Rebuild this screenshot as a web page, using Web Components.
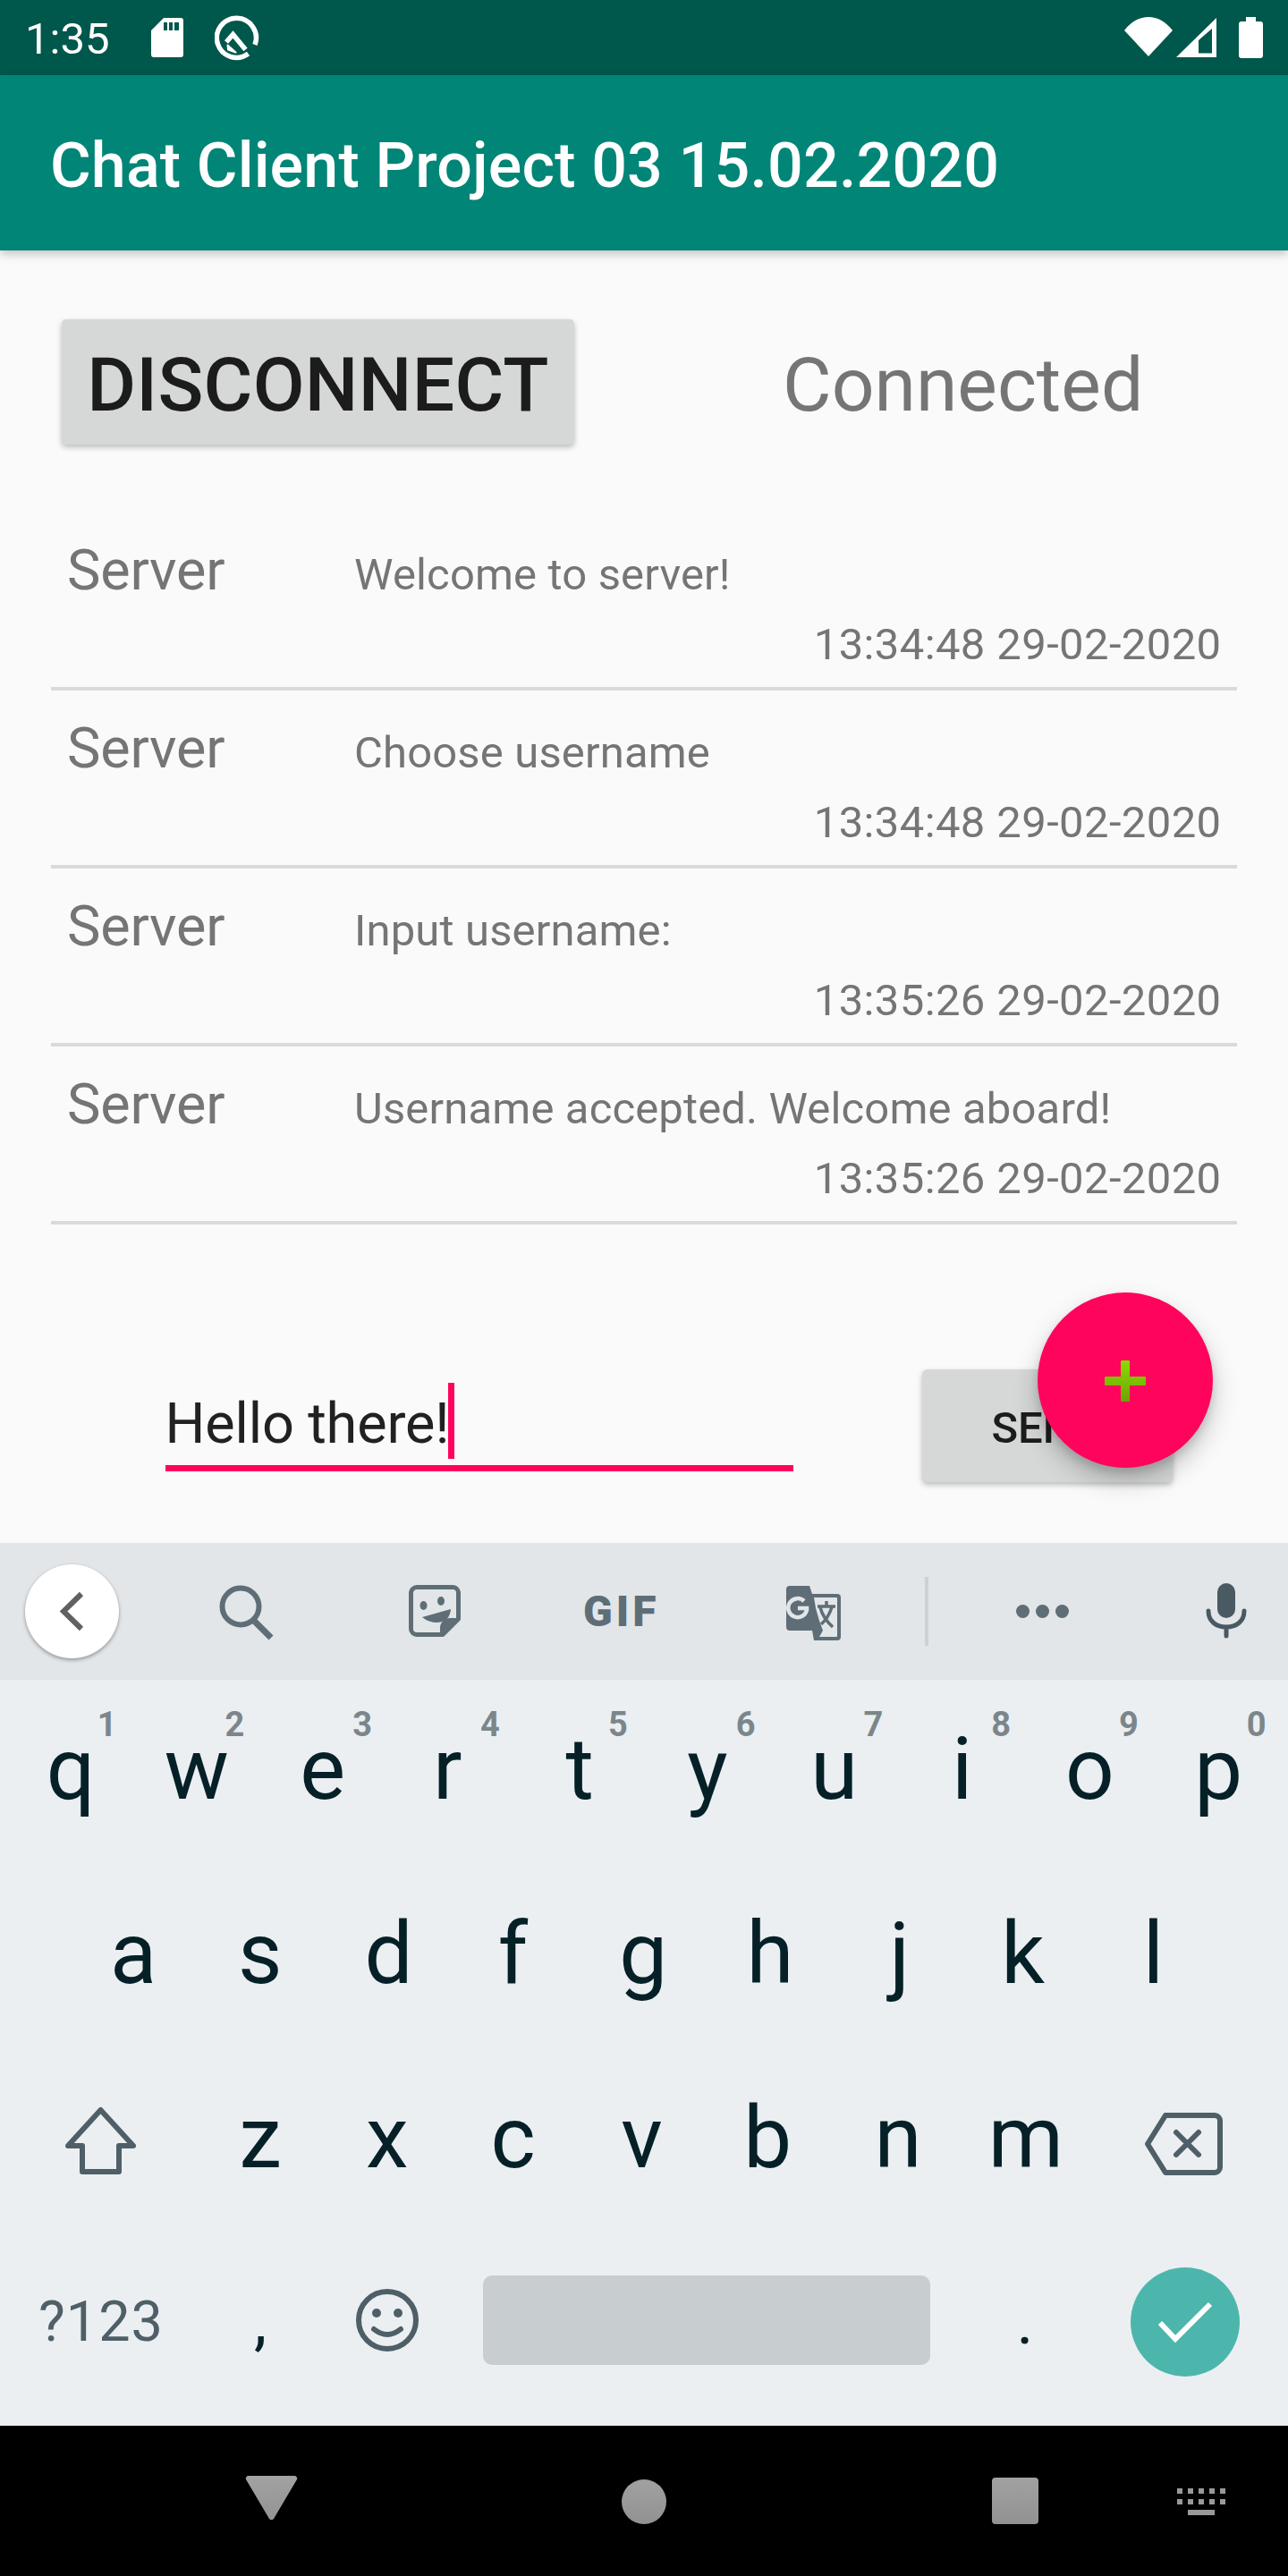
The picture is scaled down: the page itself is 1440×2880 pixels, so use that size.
<!DOCTYPE html>
<html lang="en">
<head>
  <meta charset="UTF-8">
  <meta name="viewport" content="width=device-width, initial-scale=1.0">
  <title>Chat Client Project 03</title>
  <style>
    html, body {
      margin: 0;
      padding: 0;
      background: #fafafa;
    }
    body {
      font-family: Roboto, "Liberation Sans", sans-serif;
      width: 1440px;
      height: 2880px;
      overflow: hidden;
    }
  </style>
</head>
<body>
  <status-bar></status-bar>
  <app-bar>Chat Client Project 03 15.02.2020</app-bar>
  <chat-screen>
    <connection-row></connection-row>
    <chat-message sender="Server" time="13:34:48 29-02-2020">Welcome to server!</chat-message>
    <chat-message sender="Server" time="13:34:48 29-02-2020">Choose username</chat-message>
    <chat-message sender="Server" time="13:35:26 29-02-2020">Input username:</chat-message>
    <chat-message sender="Server" time="13:35:26 29-02-2020">Username accepted. Welcome aboard!</chat-message>
    <chat-composer></chat-composer>
    <chat-fab></chat-fab>
  </chat-screen>
  <kb-toolbar></kb-toolbar>
  <kb-keys></kb-keys>
  <nav-bar></nav-bar>

  <script>
    class StatusBar extends HTMLElement {
      constructor() {
        super()
        this.attachShadow({ mode: 'open' })
      }

      connectedCallback() {
        this.shadowRoot.innerHTML = `
          <style>
            :host {
              display: flex;
              align-items: center;
              height: 84px;
              background: #00574b;
              color: #fff;
              position: relative;
            }
            .time {
              font-size: 49px;
              margin-left: 28px;
              width: 141px;
              line-height: 84px;
              margin-top: 4px;
            }
            svg { display: block; }
            .spacer { flex: 1; }
          </style>
          <span class="time">1:35</span>
          <svg width="37" height="44" viewBox="0 0 37 44" style="margin-right:34px">
            <path fill-rule="evenodd" fill="#fff" d="M14 0H33a3 3 0 0 1 3 3V41a3 3 0 0 1-3 3H3a3 3 0 0 1-3-3V14ZM14 5V14H18V5ZM20 5V14H24V5ZM26 5V14H31V5Z"/>
          </svg>
          <svg width="50" height="52" viewBox="0 0 50 52" style="margin-top:2px">
            <path d="M37.5 43A22 22 0 1 1 45 33" fill="none" stroke="#fff" stroke-width="5.5"/>
            <path d="M13 30L20.5 21.5L34.5 38.5" fill="none" stroke="#fff" stroke-width="5.5"/>
            <path d="M14.5 33.5L23.5 41.5L15 38.5Z" fill="#fff" stroke="#fff" stroke-width="2" stroke-linejoin="round"/>
          </svg>
          <span class="spacer"></span>
          <svg width="54" height="44" viewBox="0 0 54 44" style="margin-right:4px;margin-top:-2px">
            <path fill="#fff" d="M0 15Q12 0 27 0T54 15L27 44Z"/>
          </svg>
          <svg width="45" height="44" viewBox="0 0 45 44" style="margin-right:25px;margin-top:-1px">
            <path fill="#fff" fill-rule="evenodd" d="M45 0V44H0ZM40 12L25 25V39.5H40Z"/>
          </svg>
          <svg width="27" height="46" viewBox="0 0 27 46" style="margin-right:28px">
            <path fill="#fff" d="M8 0H19V5H24a3 3 0 0 1 3 3V43a3 3 0 0 1-3 3H3a3 3 0 0 1-3-3V8a3 3 0 0 1 3-3H8Z"/>
          </svg>
        `
      }
    }

    class AppBar extends HTMLElement {
      constructor() {
        super()
        this.attachShadow({ mode: 'open' })
      }

      connectedCallback() {
        this.shadowRoot.innerHTML = `
          <style>
            :host {
              display: block;
              height: 196px;
              background: #008577;
              color: #fff;
              position: relative;
              z-index: 1;
              box-shadow: 0 4px 10px rgba(0, 0, 0, .22);
              font-size: 70px;
              font-weight: 500;
              line-height: 202px;
              letter-spacing: .15px;
              padding-left: 56px;
              box-sizing: border-box;
            }
          </style>
          <slot></slot>
        `
      }
    }

    class ChatScreen extends HTMLElement {
      constructor() {
        super()
        this.attachShadow({ mode: 'open' })
      }

      connectedCallback() {
        this.shadowRoot.innerHTML = `
          <style>
            :host {
              display: flex;
              flex-direction: column;
              height: 1445px;
              background: #fafafa;
              position: relative;
            }
          </style>
          <slot></slot>
        `
      }
    }

    class ConnectionRow extends HTMLElement {
      constructor() {
        super()
        this.attachShadow({ mode: 'open' })
      }

      connectedCallback() {
        this.shadowRoot.innerHTML = `
          <style>
            :host {
              display: flex;
              align-items: flex-start;
              height: 293px;
              padding: 77px 0 0 69px;
              box-sizing: border-box;
            }
            .btn {
              width: 573px;
              height: 140px;
              border-radius: 5px;
              background: #d6d7d7;
              box-shadow: 0 3px 6px rgba(0, 0, 0, .25);
              color: #1c1c1c;
              font-size: 84px;
              font-weight: 500;
              letter-spacing: .3px;
              line-height: 148px;
              text-align: center;
            }
            .state {
              margin-left: 233px;
              color: #757575;
              font-size: 84px;
              line-height: 148px;
            }
          </style>
          <div class="btn">DISCONNECT</div>
          <div class="state">Connected</div>
        `
      }
    }

    class ChatMessage extends HTMLElement {
      constructor() {
        super()
        this.attachShadow({ mode: 'open' })
      }

      connectedCallback() {
        this.shadowRoot.innerHTML = `
          <style>
            :host {
              display: grid;
              grid-template-columns: 339px 1fr;
              grid-template-rows: 119px 1fr;
              height: 199px;
              margin: 0 57px;
              box-sizing: border-box;
              border-bottom: 4px solid #d9dbdb;
              color: #757575;
            }
            .sender {
              padding-left: 18px;
              font-size: 63px;
              letter-spacing: -.2px;
              line-height: 74px;
              margin-top: 28px;
            }
            .body {
              font-size: 49px;
              letter-spacing: .15px;
              line-height: 58px;
              margin-top: 41px;
            }
            .time {
              grid-column: 1 / 3;
              text-align: right;
              padding-right: 17.5px;
              font-size: 49px;
              letter-spacing: .38px;
              line-height: 58px;
            }
          </style>
          <div class="sender">${this.getAttribute('sender')}</div>
          <div class="body"><slot></slot></div>
          <div class="time">${this.getAttribute('time')}</div>
        `
      }
    }

    class ChatComposer extends HTMLElement {
      constructor() {
        super()
        this.attachShadow({ mode: 'open' })
      }

      connectedCallback() {
        this.shadowRoot.innerHTML = `
          <style>
            :host {
              display: flex;
              align-items: flex-start;
              padding: 164px 0 0 185px;
              box-sizing: border-box;
            }
            .field {
              width: 702px;
              height: 106px;
              margin-top: -1px;
              border-bottom: 7px solid #ff045c;
              color: #212121;
              font-size: 63px;
              letter-spacing: -.15px;
              line-height: 74px;
              display: flex;
              align-items: flex-start;
            }
            .text {
              margin: 22.5px 0 0 -.5px;
            }
            .caret {
              width: 7px;
              height: 85px;
              background: #ff045c;
              margin: 14px 0 0 -1px;
            }
            .send {
              width: 280px;
              height: 126px;
              margin: -2px 0 0 144px;
              padding-right: 1px;
              box-sizing: border-box;
              border-radius: 6px;
              background: #d6d7d7;
              box-shadow: 0 3px 6px rgba(0, 0, 0, .25);
              color: #1c1c1c;
              font-size: 49px;
              font-weight: 500;
              line-height: 131px;
              text-align: center;
            }
          </style>
          <div class="field"><span class="text">Hello there!</span><span class="caret"></span></div>
          <div class="send">SEND</div>
        `
      }
    }

    class ChatFab extends HTMLElement {
      constructor() {
        super()
        this.attachShadow({ mode: 'open' })
      }

      connectedCallback() {
        // floats over the send button
        this.shadowRoot.innerHTML = `
          <style>
            :host {
              display: block;
              position: absolute;
              left: 1160px;
              top: 1165px;
              width: 196px;
              height: 196px;
              border-radius: 50%;
              background: #ff045c;
              box-shadow: 0 14px 28px rgba(0, 0, 0, .22), 0 6px 10px rgba(0, 0, 0, .12);
            }
            svg {
              position: absolute;
              left: 75px;
              top: 76px;
            }
          </style>
          <svg width="46" height="46" viewBox="0 0 46 46">
            <defs>
              <linearGradient id="g" x1="0" y1="0" x2="0" y2="1">
                <stop offset="0" stop-color="#8bdc00"/>
                <stop offset="1" stop-color="#6ea300"/>
              </linearGradient>
            </defs>
            <path fill="url(#g)" d="M18 1a1 1 0 0 1 1-1h8a1 1 0 0 1 1 1V18H45a1 1 0 0 1 1 1v8a1 1 0 0 1-1 1H28V45a1 1 0 0 1-1 1H19a1 1 0 0 1-1-1V28H1a1 1 0 0 1-1-1V19a1 1 0 0 1 1-1H18Z"/>
          </svg>
        `
      }
    }

    class KbToolbar extends HTMLElement {
      constructor() {
        super()
        this.attachShadow({ mode: 'open' })
      }

      connectedCallback() {
        this.shadowRoot.innerHTML = `
          <style>
            :host {
              display: block;
              height: 153px;
              background: #e2e6e9;
              position: relative;
              color: #5f6e76;
            }
            svg { position: absolute; display: block; }
            .back {
              position: absolute;
              left: 28px;
              top: 24px;
              width: 105px;
              height: 105px;
              border-radius: 50%;
              background: #fff;
              box-shadow: 0 2px 4px rgba(0, 0, 0, .35);
            }
            .gif {
              position: absolute;
              left: 652px;
              top: 50px;
              font-size: 48px;
              line-height: 54px;
              font-weight: 900;
              letter-spacing: 4px;
              color: #5f6e76;
            }
            .rule {
              position: absolute;
              left: 1034px;
              top: 38px;
              width: 4px;
              height: 77px;
              background: #ccd1d3;
            }
          </style>
          <div class="back"></div>
          <svg style="left:64px;top:54px" width="32" height="45" viewBox="0 0 32 45">
            <path d="M27 3L7 22.5L27 42" fill="none" stroke="#616161" stroke-width="6"/>
          </svg>
          <svg style="left:244px;top:46px" width="64" height="64" viewBox="0 0 64 64">
            <circle cx="25" cy="25" r="20.5" fill="none" stroke="#5f6e76" stroke-width="6"/>
            <path d="M39 40L59 60" stroke="#5f6e76" stroke-width="7"/>
          </svg>
          <svg style="left:457px;top:47px" width="58" height="58" viewBox="0 0 58 58">
            <path fill="none" stroke="#5f6e76" stroke-width="5" stroke-linejoin="round" d="M9 2.5H49a6.5 6.5 0 0 1 6.5 6.5V38L38 55.5H9A6.5 6.5 0 0 1 2.5 49V9A6.5 6.5 0 0 1 9 2.5Z"/>
            <path fill="#5f6e76" d="M55 37H46a11 11 0 0 0-11 11v8Z"/>
            <ellipse cx="16.5" cy="23" rx="4" ry="5" fill="#5f6e76"/>
            <ellipse cx="36" cy="18" rx="4" ry="5" fill="#5f6e76"/>
            <path fill="#5f6e76" d="M15 36L47 27Q46 41 32 42Q22 42 15 36Z"/>
          </svg>
          <span class="gif">GIF</span>
          <svg style="left:879px;top:48px" width="62" height="62" viewBox="0 0 62 62">
            <path fill="#5f6e76" d="M4 0H26L29 9H57a4 4 0 0 1 4 4V57a4 4 0 0 1-4 4H31L29 50H4a4 4 0 0 1-4-4V4A4 4 0 0 1 4 0Z"/>
            <path fill="#e2e6e9" d="M31 13H56a1 1 0 0 1 1 1V56a1 1 0 0 1-1 1H37L41 50L37 39L33 25Z"/>
            <path fill="none" stroke="#5f6e76" stroke-width="3.5" d="M35 23H55M45 17V23M38 24Q41 36 52 46M51 24Q47 36 39 43"/>
            <path fill="none" stroke="#e2e6e9" stroke-width="4.5" d="M20 17A10.5 10.5 0 1 0 23 27V25H13"/>
          </svg>
          <div class="rule"></div>
          <svg style="left:1136px;top:69px" width="60" height="15" viewBox="0 0 60 15">
            <circle cx="7.5" cy="7.5" r="7.5" fill="#5f6e76"/>
            <circle cx="29.5" cy="7.5" r="7.5" fill="#5f6e76"/>
            <circle cx="51.5" cy="7.5" r="7.5" fill="#5f6e76"/>
          </svg>
          <svg style="left:1348px;top:45px" width="46" height="62" viewBox="0 0 46 62">
            <rect x="13" y="0" width="20" height="39" rx="10" fill="#4a5a62"/>
            <path d="M3 31C3 43 12 49 23 49S43 43 43 31M23 49V59" fill="none" stroke="#4a5a62" stroke-width="5" stroke-linecap="round"/>
          </svg>
        `
      }
    }

    // glyphs in the reference are centred by their ink, so a few need a nudge
    const NUDGE = { q: 2, e: -2, r: -5, u: -1, i: -1, o: -1, a: 2, s: 1, d: 2, f: -2, g: 1, j: 2, k: -3, z: 1, c: -2, v: -1, b: -3 }

    class KbKeys extends HTMLElement {
      constructor() {
        super()
        this.attachShadow({ mode: 'open' })
      }

      connectedCallback() {
        const key = (ch, hint) => {
          const n = NUDGE[ch] || 0
          const pad = n > 0 ? `padding-left:${n * 2}px` : n < 0 ? `padding-right:${-n * 2}px` : ''
          return `<span class="key" style="${pad}">${ch}${hint ? `<span class="hint">${hint}</span>` : ''}</span>`
        }
        const row1 = [...'qwertyuiop'].map((c, i) => key(c, String((i + 1) % 10))).join('')
        const row2 = [...'asdfghjkl'].map(c => key(c)).join('')
        const row3 = [...'zxcvbnm'].map(c => key(c)).join('')
        this.shadowRoot.innerHTML = `
          <style>
            :host {
              display: block;
              height: 834px;
              background: #ebeff2;
              color: #062028;
              font-size: 96px;
              box-sizing: border-box;
              padding-bottom: 10px;
            }
            .row {
              display: flex;
              height: 206px;
              padding-bottom: 6px;
              box-sizing: border-box;
            }
            .r1 { padding-left: 5.6px; }
            .r2 { padding-left: 75.6px; }
            .key {
              width: 142.8px;
              flex: none;
              box-sizing: border-box;
              text-align: center;
              line-height: 200px;
              position: relative;
            }
            .hint {
              position: absolute;
              left: 72px;
              top: 28px;
              width: 84px;
              font-size: 38px;
              line-height: 44px;
              font-weight: 700;
              color: #7b868c;
            }
            .side {
              flex: none;
              display: flex;
              align-items: center;
              justify-content: center;
            }
            .shift { width: 218.6px; }
            .del { width: 210px; }
            .r3 .side svg { display: block; }
            .r4 { align-items: center; }
            .sym {
              width: 222px;
              padding-left: 2px;
              text-align: center;
              font-size: 63px;
              letter-spacing: 1px;
              color: #4f5f67;
            }
            .comma, .dot {
              width: 134px;
              text-align: center;
              font-size: 72px;
              line-height: 200px;
            }
            .dot { line-height: 204px; margin-left: 39px; }
            .emoji { width: 150px; }
            .space {
              width: 500px;
              height: 100px;
              flex: none;
              margin: -4px 0 0 32px;
              border-radius: 10px;
              background: #c8cdd0;
            }
            .enter {
              width: 122px;
              height: 122px;
              flex: none;
              margin-left: 51px;
              border-radius: 50%;
              background: #4db6ac;
              display: flex;
              align-items: center;
              justify-content: center;
            }
          </style>
          <div class="row r1">${row1}</div>
          <div class="row r2">${row2}</div>
          <div class="row r3">
            <span class="side shift">
              <svg width="79" height="76" viewBox="0 0 79 76" style="margin-left:6px;margin-top:6px">
                <path fill="none" stroke="#4f5f67" stroke-width="6" stroke-linejoin="round" d="M39.5 4L76 44H60V73H19V44H3Z"/>
              </svg>
            </span>
            ${row3}
            <span class="side del">
              <svg width="88" height="70" viewBox="0 0 88 70" style="margin-top:14px">
                <path fill="none" stroke="#4f5f67" stroke-width="6" stroke-linejoin="round" d="M24 3H79a6 6 0 0 1 6 6V61a6 6 0 0 1-6 6H24L4 35Z"/>
                <path stroke="#4f5f67" stroke-width="6" stroke-linecap="round" d="M36 22L61 47M61 22L36 47"/>
              </svg>
            </span>
          </div>
          <div class="row r4">
            <span class="sym" style="line-height:200px">?123</span>
            <span class="comma">,</span>
            <span class="side emoji">
              <svg width="70" height="70" viewBox="0 0 70 70" style="margin-top:-4px">
                <circle cx="35" cy="35" r="32" fill="none" stroke="#4f5f67" stroke-width="6"/>
                <circle cx="23" cy="27" r="5" fill="#4f5f67"/>
                <circle cx="47" cy="27" r="5" fill="#4f5f67"/>
                <path d="M20 45Q35 57 50 45" fill="none" stroke="#4f5f67" stroke-width="6" stroke-linecap="round"/>
              </svg>
            </span>
            <span class="space"></span>
            <span class="dot">.</span>
            <span class="enter">
              <svg width="62" height="46" viewBox="0 0 62 46">
                <path d="M3 24L20 42L59 3" fill="none" stroke="#fff" stroke-width="6"/>
              </svg>
            </span>
          </div>
        `
      }
    }

    class NavBar extends HTMLElement {
      constructor() {
        super()
        this.attachShadow({ mode: 'open' })
      }

      connectedCallback() {
        this.shadowRoot.innerHTML = `
          <style>
            :host {
              display: block;
              height: 168px;
              background: #000;
              position: relative;
            }
            svg { position: absolute; display: block; }
          </style>
          <svg style="left:0;top:0" width="1440" height="168" viewBox="0 0 1440 168">
            <defs>
              <linearGradient id="n" gradientUnits="userSpaceOnUse" x1="0" y1="56" x2="0" y2="112">
                <stop offset="0" stop-color="#a2a2a2"/>
                <stop offset="1" stop-color="#919191"/>
              </linearGradient>
            </defs>
            <path fill="url(#n)" d="M278 56H329a3 3 0 0 1 3 4L306 104a3 3 0 0 1-5 0L275 60A3 3 0 0 1 278 56Z"/>
            <circle cx="720" cy="85" r="25" fill="url(#n)"/>
            <rect x="1109" y="58" width="52" height="52" rx="4" fill="url(#n)"/>
            <g fill="#999">
              <rect x="1316" y="70" width="6" height="6"/><rect x="1328" y="70" width="6" height="6"/><rect x="1340" y="70" width="6" height="6"/><rect x="1352" y="70" width="6" height="6"/><rect x="1364" y="70" width="6" height="6"/>
              <rect x="1316" y="82" width="6" height="6"/><rect x="1328" y="82" width="6" height="6"/><rect x="1340" y="82" width="6" height="6"/><rect x="1352" y="82" width="6" height="6"/><rect x="1364" y="82" width="6" height="6"/>
              <rect x="1328" y="94" width="30" height="6"/>
            </g>
          </svg>
        `
      }
    }

    customElements.define('status-bar', StatusBar)
    customElements.define('app-bar', AppBar)
    customElements.define('chat-screen', ChatScreen)
    customElements.define('connection-row', ConnectionRow)
    customElements.define('chat-message', ChatMessage)
    customElements.define('chat-composer', ChatComposer)
    customElements.define('chat-fab', ChatFab)
    customElements.define('kb-toolbar', KbToolbar)
    customElements.define('kb-keys', KbKeys)
    customElements.define('nav-bar', NavBar)
  </script>
</body>
</html>
